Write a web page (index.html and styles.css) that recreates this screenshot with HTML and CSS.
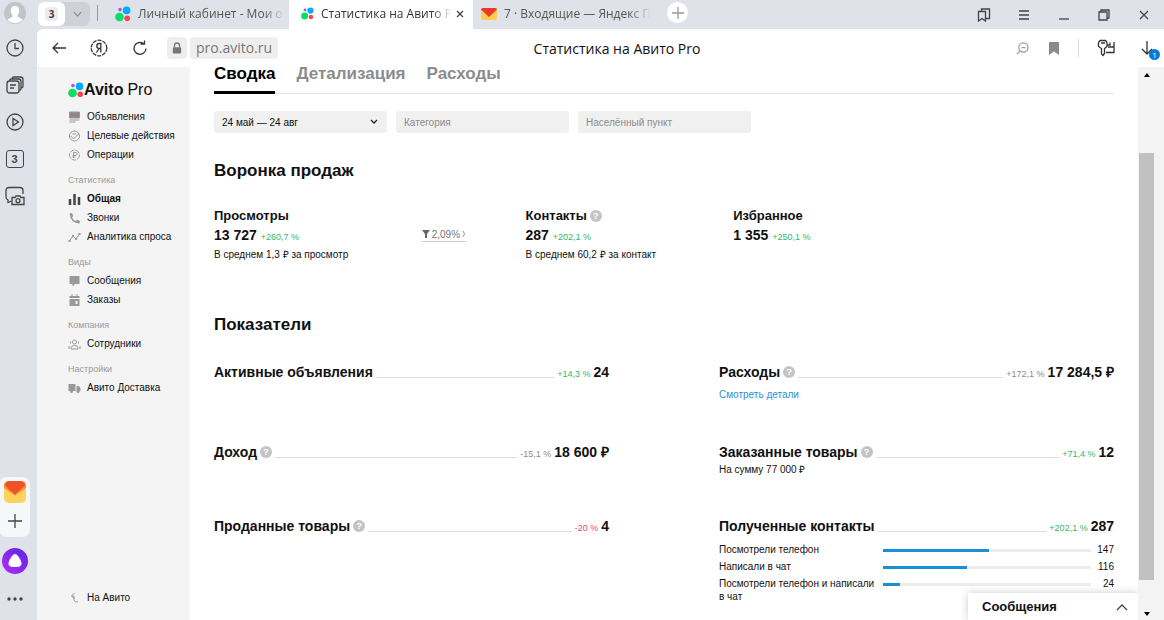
FILE: index.html
```
<!DOCTYPE html>
<html lang="ru">
<head>
    <meta charset="UTF-8">
    <meta name="viewport" content="width=device-width, initial-scale=1.0">
    <title>Статистика на Авито Pro</title>
    <link rel="stylesheet" href="styles.css">
</head>
<body>
    <svg class="sprite" aria-hidden="true">
        <symbol id="avito" viewBox="0 0 16 16">
            <circle cx="4.5" cy="11" r="4.3" fill="#04e061"/>
            <circle cx="11.6" cy="4.4" r="3.8" fill="#00aaff"/>
            <circle cx="12.2" cy="12.2" r="2.8" fill="#ff4053"/>
            <circle cx="5" cy="3.6" r="1.8" fill="#965eeb"/>
        </symbol>
    </svg>

    <div class="browser">
        <header class="tabbar">
            <button class="avatar" aria-label="Профиль">
                <svg viewBox="0 0 22 22" width="22" height="22"><circle cx="11" cy="11" r="11" fill="#c3c4c7"/><path d="M11 4c3 0 4.300 2 4.300 4.600 0 2.200-.8 3.800-1.800 4.700v1.200c0 1 4 1.300 5.200 3.500A11 11 0 0 1 3.300 18c1.200-2.200 5.200-2.500 5.200-3.500v-1.200c-1-.9-1.800-2.500-1.800-4.700C6.700 6 8 4 11 4z" fill="#fff"/></svg>
            </button>
            <div class="tab-group">
                <button class="group-count"><span>3</span></button>
                <button class="group-more" aria-label="Список вкладок">
                    <svg viewBox="0 0 10 6" width="9" height="6"><path d="M1 1l4 4 4-4" class="line"/></svg>
                </button>
            </div>
            <nav class="tabs">
                <a class="tab" href="#"><svg width="16" height="16"><use href="#avito"/></svg><span>Личный кабинет - Мои о</span></a>
                <a class="tab tab-active" href="#"><svg width="13" height="13"><use href="#avito"/></svg><span>Статистика на Авито Pr</span>
                    <svg viewBox="0 0 8 8" width="8" height="8"><path d="M1 1l6 6M7 1L1 7" class="line"/></svg></a>
                <a class="tab" href="#"><svg viewBox="0 0 16 12" width="16" height="12"><rect width="16" height="12" rx="2" fill="#ffcc4d"/><path d="M0 1.500Q0 0 2 0h12q2 0 2 1.500L8 9z" fill="#e8392b"/></svg><span>7 · Входящие — Яндекс П</span></a>
            </nav>
            <button class="new-tab" aria-label="Новая вкладка">
                <svg viewBox="0 0 12 12" width="12" height="12"><path d="M6 0v12M0 6h12" class="line"/></svg>
            </button>
            <div class="window-controls">
                <button aria-label="Закладки"><svg viewBox="0 0 14 14" width="14" height="14"><path d="M1.500 3.500h7v9.500L5 10.500 1.500 13zM4.500 3.500V1h8v9.500h-4" class="line"/></svg></button>
                <button aria-label="Меню"><svg viewBox="0 0 10 10" width="10" height="10"><path d="M0 1h10M0 5h10M0 9h10" class="line"/></svg></button>
                <button aria-label="Свернуть"><svg viewBox="0 0 10 10" width="10" height="10"><path d="M0 9h10" class="line"/></svg></button>
                <button aria-label="Развернуть"><svg viewBox="0 0 12 12" width="12" height="12"><path d="M1 3h8v8H1zM3 3V1h8v8H9" class="line"/></svg></button>
                <button aria-label="Закрыть"><svg viewBox="0 0 10 10" width="10" height="10"><path d="M1 1l8 8M9 1L1 9" class="line"/></svg></button>
            </div>
        </header>

        <div class="window">
            <aside class="rail">
                <button aria-label="История"><svg viewBox="0 0 18 18" width="18" height="18"><circle cx="9" cy="9" r="8" class="line"/><path d="M9 4v5.500h4" class="line"/></svg></button>
                <button aria-label="Коллекции"><svg viewBox="0 0 18 18" width="18" height="18"><rect x="1" y="5" width="12" height="12" rx="2.500" class="line"/><path d="M4 9h6M4 12h4M3.500 4.500Q4 3 5.500 3H12.500Q15 3 15 5.500V12.500Q15 14 13.500 14.500M6 2.500Q6.500 1 8 1H14.500Q17 1 17 3.500V10Q17 11.500 15.500 12" class="line"/></svg></button>
                <button aria-label="Видео"><svg viewBox="0 0 18 18" width="18" height="18"><circle cx="9" cy="9" r="8" class="line"/><path d="M7 5.500v7L12.500 9z" class="line"/></svg></button>
                <button aria-label="Группы вкладок" class="rail-count"><span>3</span></button>
                <button aria-label="Скриншот"><svg viewBox="0 0 20 20" width="20" height="20"><path d="M6.500 15L3 16.500V14Q1 13 1 11V4.500Q1 1.500 4 1.500H15Q18 1.500 18 4.500V8" class="line"/><path d="M7 11.500h3l1-1.500h4l1 1.500h3v7H7z" class="line"/><circle cx="13" cy="14.700" r="2" class="line"/></svg></button>
                <div class="rail-box">
                    <button aria-label="Почта"><svg viewBox="0 0 22 22" width="22" height="22"><rect width="22" height="22" rx="5" fill="#ffd25e"/><path d="M0 5Q0 0 5 0h12q5 0 5 5v2L11 14.500 0 7z" fill="#ff8a3c"/><path d="M1 4.500Q2 0 6 0h10q4 0 5 4.500L11 13.500z" fill="#ee5327"/></svg></button>
                    <button aria-label="Добавить"><svg viewBox="0 0 14 14" width="14" height="14"><path d="M7 0v14M0 7h14" class="line"/></svg></button>
                </div>
                <button aria-label="Алиса" class="alice"><svg viewBox="0 0 26 26" width="26" height="26"><defs><linearGradient id="alice" x1="1" y1="0" x2="0" y2="1"><stop stop-color="#5427e0"/><stop offset="1" stop-color="#b52bff"/></linearGradient></defs><circle cx="13" cy="13" r="13" fill="url(#alice)"/><path d="M13 6c2.500 0 6.500 6.500 6.500 9.500S16.500 19 13 19s-6.500-.5-6.500-3.500S10.500 6 13 6z" fill="#fff"/></svg></button>
                <button aria-label="Ещё"><svg viewBox="0 0 16 4" width="16" height="4" fill="#444"><circle cx="2" cy="2" r="1.700"/><circle cx="8" cy="2" r="1.700"/><circle cx="14" cy="2" r="1.700"/></svg></button>
            </aside>

            <div class="view">
                <div class="toolbar">
                    <div class="nav-buttons">
                        <button aria-label="Назад"><svg viewBox="0 0 14 12" width="14" height="12"><path d="M14 6H1M6 1L1 6l5 5" class="line"/></svg></button>
                        <button aria-label="Яндекс"><svg viewBox="0 0 18 18" width="18" height="18"><circle cx="9" cy="9" r="7.800" class="line" stroke-dasharray="4 1"/><path d="M10.800 13.500v-9H9.300Q6.800 4.500 6.800 7t2.500 2.500h1.500M9 9.500l-2.500 4" class="line"/></svg></button>
                        <button aria-label="Обновить"><svg viewBox="0 0 16 16" width="16" height="16"><path d="M14 8.500A6 6 0 1 1 11.500 3.500M8.500 4h4V.5" class="line"/></svg></button>
                        <div class="address">
                            <button class="lock" aria-label="Защищено"><svg viewBox="0 0 12 14" width="10" height="12"><rect x="1" y="6" width="10" height="7.500" rx="1" fill="#777"/><path d="M3 6V4a3 3 0 0 1 6 0v2" fill="none" stroke="#777" stroke-width="1.600"/></svg></button>
                            <a class="url" href="#">pro.avito.ru</a>
                        </div>
                    </div>
                    <div class="page-title">Статистика на Авито Pro</div>
                    <div class="toolbar-actions">
                        <button aria-label="Масштаб"><svg class="dim" viewBox="0 0 14 14" width="13" height="13"><circle cx="8" cy="6" r="5" class="line"/><path d="M6 6h4M4.500 9.500L1 13" class="line"/></svg></button>
                        <button aria-label="В закладки"><svg viewBox="0 0 10 13" width="10" height="13"><path d="M0 1Q0 0 1 0h8q1 0 1 1v12L5 9.500 0 13z" fill="#8a8a8a"/></svg></button>
                        <i class="divider"></i>
                        <button aria-label="Пароли"><svg viewBox="0 0 18 18" width="18" height="18"><path d="M3 1.500h5.500l1.500 2v4l-2.500 2v5L6 16.500l-1.500-1.500V9.500L1.500 7.500v-4zM4 4h4M10 6h3V3.500M17 3v10.500H9M17 8h-6" class="line"/></svg></button>
                        <button class="download" aria-label="Загрузки"><svg viewBox="0 0 12 14" width="12" height="14"><path d="M6 0v13M1 8l5 5 5-5" class="line"/></svg><span class="badge">1</span></button>
                    </div>
                </div>

                <div class="page">
                    <nav class="sidebar">
                        <a class="logo" href="#"><svg width="16" height="16"><use href="#avito"/></svg><b>Avito</b> <span>Pro</span></a>
                        <a class="item" href="#"><svg viewBox="0 0 12 12"><path d="M1 1h10v6H1z" fill="#8f8787"/><path d="M1 9h10M1 11h6"/></svg>Объявления</a>
                        <a class="item" href="#"><svg viewBox="0 0 12 12"><circle cx="6" cy="6" r="5"/><path d="M2 6l3 3 5-5M4 4h4"/></svg>Целевые действия</a>
                        <a class="item" href="#"><svg viewBox="0 0 12 12"><circle cx="6" cy="6" r="5" stroke-dasharray="5 1"/><path d="M5 9V3.500h2a1.500 1.500 0 0 1 0 3H4M4 8h3"/></svg>Операции</a>
                        <h4>Статистика</h4>
                        <a class="item item-active" href="#"><svg viewBox="0 0 12 12"><path d="M1.500 12V6M6 12V1M10.500 12V4" stroke-width="2.500"/></svg>Общая</a>
                        <a class="item" href="#"><svg viewBox="0 0 12 12"><path d="M1 1.500L3.500 1l1.300 3L3.500 5.500Q5 8 7 9l1.500-1.200L11.500 9l-.5 2.500Q2 11 1 1.500z" class="solid"/></svg>Звонки</a>
                        <a class="item" href="#"><svg viewBox="0 0 12 12"><path d="M1 10l3.500-5 3 3L11.500 2"/><path d="M0 9h2v2H0zM3.500 4h2v2h-2zM6.500 7h2v2h-2zM10 2h2v2h-2z" class="solid"/></svg>Аналитика спроса</a>
                        <h4>Виды</h4>
                        <a class="item" href="#"><svg viewBox="0 0 12 12"><path d="M1 1h10v8H6.500L4 11.500V9H1z" class="solid"/></svg>Сообщения</a>
                        <a class="item" href="#"><svg viewBox="0 0 12 12"><path d="M1 2h10v2H1zM1 5h10v7H1zM3 0h1v2H3zM8 0h1v2H8z" class="solid"/><path d="M7 7h2v3H7z" fill="#f4f4f4" stroke="none"/></svg>Заказы</a>
                        <h4>Компания</h4>
                        <a class="item" href="#"><svg viewBox="0 0 12 12"><circle cx="6" cy="4" r="2"/><path d="M2.500 11V9.500Q3 7.500 6 7.500T9.500 9.500V11zM2 3.500v2M10 3.500v2M.5 11V8M11.500 11V8"/></svg>Сотрудники</a>
                        <h4>Настройки</h4>
                        <a class="item" href="#"><svg viewBox="0 0 12 12"><path d="M0 2h7v7H0zM8 4h2.500L12 6.500V9H8z" class="solid"/><circle cx="3" cy="9.500" r="1.500" class="solid"/><circle cx="9.500" cy="9.500" r="1.500" class="solid"/></svg>Авито Доставка</a>
                        <a class="item item-back" href="#"><svg viewBox="0 0 12 12"><path d="M6 1L3 4l3 3M3 4h2.500v4.500Q6 10 9.500 10"/></svg>На Авито</a>
                    </nav>

                    <main class="content">
                        <nav class="sections">
                            <a class="current" href="#">Сводка</a>
                            <a href="#">Детализация</a>
                            <a href="#">Расходы</a>
                        </nav>

                        <form class="filters">
                            <select aria-label="Период"><option>24 май — 24 авг</option></select>
                            <input type="text" aria-label="Категория" placeholder="Категория">
                            <input type="text" aria-label="Населённый пункт" placeholder="Населённый пункт">
                        </form>

                        <h2>Воронка продаж</h2>
                        <section class="funnel">
                            <div>
                                <h3>Просмотры</h3>
                                <p class="value">13 727 <small class="up">+260,7 %</small></p>
                                <p class="note">В среднем 1,3 ₽ за просмотр</p>
                            </div>
                            <div class="conversion">
                                <a href="#"><svg viewBox="0 0 8 8" width="8" height="8"><path d="M0 0h8L5 4v4H3V4z" fill="#666"/></svg>2,09%<svg viewBox="0 0 4 8" width="4" height="8"><path d="M1 1q3 3 0 6" fill="none" stroke="#999"/></svg></a>
                            </div>
                            <div>
                                <h3>Контакты <button class="help" aria-label="Подсказка">?</button></h3>
                                <p class="value">287 <small class="up">+202,1 %</small></p>
                                <p class="note">В среднем 60,2 ₽ за контакт</p>
                            </div>
                            <div>
                                <h3>Избранное</h3>
                                <p class="value">1 355 <small class="up">+250,1 %</small></p>
                            </div>
                        </section>

                        <h2>Показатели</h2>
                        <section class="metrics">
                            <div class="metric">
                                <div class="row"><h3>Активные объявления</h3><i></i><small class="up">+14,3 %</small><b>24</b></div>
                            </div>
                            <div class="metric">
                                <div class="row"><h3>Расходы <button class="help" aria-label="Подсказка">?</button></h3><i></i><small>+172,1 %</small><b>17 284,5 ₽</b></div>
                                <a class="details" href="#">Смотреть детали</a>
                            </div>
                            <div class="metric">
                                <div class="row"><h3>Доход <button class="help" aria-label="Подсказка">?</button></h3><i></i><small>-15,1 %</small><b>18 600 ₽</b></div>
                            </div>
                            <div class="metric">
                                <div class="row"><h3>Заказанные товары <button class="help" aria-label="Подсказка">?</button></h3><i></i><small class="up">+71,4 %</small><b>12</b></div>
                                <p class="note">На сумму 77 000 ₽</p>
                            </div>
                            <div class="metric">
                                <div class="row"><h3>Проданные товары <button class="help" aria-label="Подсказка">?</button></h3><i></i><small class="down">-20 %</small><b>4</b></div>
                            </div>
                            <div class="metric">
                                <div class="row"><h3>Полученные контакты</h3><i></i><small class="up">+202,1 %</small><b>287</b></div>
                                <ul class="bars">
                                    <li><span>Посмотрели телефон</span><div class="bar"><div style="width: 51.2%"></div></div><em>147</em></li>
                                    <li><span>Написали в чат</span><div class="bar"><div style="width: 40.4%"></div></div><em>116</em></li>
                                    <li><span>Посмотрели телефон и написали в чат</span><div class="bar"><div style="width: 8.4%"></div></div><em>24</em></li>
                                </ul>
                            </div>
                        </section>

                        <button class="messenger">Сообщения <svg viewBox="0 0 12 8" width="12" height="8"><path d="M1 7l5-5 5 5" class="line"/></svg></button>
                    </main>

                    <div class="scrollbar">
                        <svg viewBox="0 0 6 4" width="6" height="4"><path d="M0 4l3-4 3 4z"/></svg>
                        <div class="thumb"></div>
                        <svg viewBox="0 0 6 4" width="6" height="4"><path d="M0 0l3 4 3-4z"/></svg>
                    </div>
                </div>
            </div>
        </div>
    </div>
</body>
</html>
```
FILE: styles.css
```
* {
    box-sizing: border-box;
}
body {
    margin: 0;
    font-family: "Liberation Sans", Arial, sans-serif;
    font-size: 10px;
    color: #111;
    background: #fff;
}
a {
    color: inherit;
    text-decoration: none;
}
button {
    display: flex;
    align-items: center;
    justify-content: center;
    padding: 0;
    border: 0;
    background: none;
    font: inherit;
    color: inherit;
    cursor: pointer;
}
h2, h3, h4, p, ul {
    margin: 0;
    padding: 0;
}
svg {
    flex: none;
}
.line {
    fill: none;
    stroke: #444;
    stroke-width: 1.3;
}
.sprite {
    display: none;
}

/* browser window */
.browser {
    display: flex;
    flex-direction: column;
    height: 100vh;
    overflow: hidden;
    background: #dfe2e9;
}
.tabbar {
    display: flex;
    align-items: center;
    height: 29px;
    padding-left: 4px;
    font-family: "Open Sans", sans-serif;
    font-size: 12px;
}
.avatar {
    margin-bottom: 4px;
}
.tab-group {
    display: flex;
    height: 24px;
    margin: 0 7px 2px 12px;
    border-radius: 6px;
    background: #cfd1d6;
}
.group-count {
    width: 27px;
    border-radius: 6px;
    background: #fff;
    font-size: 10px;
    font-weight: bold;
    color: #444;
}
.group-count span {
    padding: 0 4px;
    border-radius: 4px;
    background: #ececec;
}
.group-more {
    width: 25px;
}
.group-more .line {
    stroke: #888;
}
.tabs {
    display: flex;
    align-self: stretch;
    padding-left: 10px;
    position: relative;
}
.tabs::before {
    content: "";
    width: 1px;
    height: 16px;
    margin-top: 5px;
    background: #999;
    position: absolute;
    left: 0;
}
.tab {
    display: flex;
    align-items: center;
    gap: 7px;
    width: 182px;
    padding: 0 4px 2px 8px;
    border-radius: 0 0 6px 6px;
    color: #555;
}
.tab span {
    flex: 1;
    overflow: hidden;
    white-space: nowrap;
    -webkit-mask-image: linear-gradient(to right, #000 85%, transparent);
    mask-image: linear-gradient(to right, #000 85%, transparent);
}
.tab-active {
    gap: 4px;
    width: 184px;
    padding: 0 9px 2px 12px;
    border-radius: 0;
    background: #fff;
    color: #333;
}
.tab-active span {
    padding-left: 3px;
}
.new-tab {
    width: 21px;
    height: 21px;
    margin: 0 0 4px 12px;
    border-radius: 50%;
    background: #fff;
}
.new-tab .line {
    stroke: #999;
}
.window-controls {
    display: flex;
    margin-left: auto;
}
.window-controls button {
    width: 40px;
    height: 26px;
}
.window {
    display: flex;
    flex: 1;
    min-height: 0;
}
.rail {
    display: flex;
    flex-direction: column;
    align-items: center;
    width: 37px;
    padding: 0 8px 7px 0;
}
.rail button {
    height: 37px;
}
.rail-count span {
    width: 18px;
    border: 1px solid #444;
    border-radius: 3px;
    font-size: 11px;
    font-weight: bold;
    line-height: 16px;
    color: #444;
}
.rail-box {
    display: flex;
    flex-direction: column;
    align-items: center;
    width: 31px;
    margin-top: auto;
    padding-bottom: 2px;
    border-radius: 8px;
    background: #f6f7f9;
}
.rail-box button {
    height: 30px;
}
.rail .alice {
    height: 48px;
}
.rail button:last-child {
    height: 28px;
}

/* toolbar */
.view {
    display: flex;
    flex: 1;
    flex-direction: column;
    min-width: 0;
    border-top-left-radius: 6px;
    background: #fff;
}
.toolbar {
    display: grid;
    grid-template-columns: 1fr auto 1fr;
    align-items: center;
    height: 38px;
    padding-left: 15px;
    font-family: "Open Sans", sans-serif;
}
.toolbar .line {
    stroke: #333;
}
.nav-buttons, .toolbar-actions {
    display: flex;
    align-items: center;
}
.nav-buttons {
    gap: 24px;
}
.address {
    display: flex;
    gap: 3px;
    margin-left: -5px;
}
.lock, .url {
    height: 22px;
    border-radius: 4px;
    background: #eee;
}
.lock {
    width: 20px;
}
.url {
    padding: 0 6px;
    font-size: 14px;
    line-height: 22px;
    color: #777;
}
.page-title {
    margin-left: 18px;
    font-size: 14px;
    white-space: nowrap;
}
.toolbar-actions {
    justify-content: flex-end;
    gap: 20px;
    padding-right: 11px;
}
.toolbar .dim .line {
    stroke: #999;
}
.divider {
    width: 1px;
    height: 18px;
    margin: 0 -2px 0 -1px;
    background: #ddd;
}
.download {
    position: relative;
    margin-left: 6px;
}
.badge {
    position: absolute;
    right: -7px;
    bottom: -5px;
    width: 11px;
    border-radius: 50%;
    background: #0a7ad6;
    font-size: 8px;
    line-height: 11px;
    color: #fff;
}

/* page */
.page {
    display: flex;
    flex: 1;
    min-height: 0;
}
.sidebar {
    display: flex;
    flex-direction: column;
    width: 153px;
    padding: 13px 0 13px 31px;
    background: #f4f4f4;
}
.logo {
    display: flex;
    align-items: center;
    height: 20px;
    margin-bottom: 7px;
    font-size: 16px;
}
.logo span {
    margin-left: 4px;
}
.sidebar h4 {
    height: 18px;
    margin-top: 7px;
    font-size: 9px;
    font-weight: normal;
    line-height: 18px;
    color: #999;
}
.item {
    display: flex;
    align-items: center;
    gap: 6px;
    height: 19px;
    white-space: nowrap;
}
.item svg {
    width: 13px;
    height: 12px;
    fill: none;
    stroke: #999;
}
.item .solid {
    fill: #999;
    stroke: none;
}
.item-active {
    font-weight: bold;
}
.item-active svg {
    stroke: #444;
}
.item-back {
    margin-top: auto;
}
.content {
    position: relative;
    flex: 1;
    min-width: 0;
    padding: 0 24px;
    overflow: hidden;
}
.sections {
    display: flex;
    gap: 21px;
    height: 27px;
    border-bottom: 1px solid #e3e3e3;
    font-size: 17px;
    font-weight: bold;
    line-height: 13px;
    color: #8c8c8c;
}
.sections a {
    height: 27px;
}
.sections .current {
    border-bottom: 3px solid #000;
    color: #000;
}
.filters {
    display: flex;
    gap: 9px;
    margin-top: 17px;
}
.filters select, .filters input {
    width: 173px;
    height: 22px;
    padding: 0 8px;
    border: 0;
    border-radius: 3px;
    background: #f0f0f0;
    font: inherit;
    color: #111;
}
.filters select {
    appearance: none;
    background: #f0f0f0 url("data:image/svg+xml,%3Csvg xmlns='http://www.w3.org/2000/svg' viewBox='0 0 8 6'%3E%3Cpath d='M1 1l3 3 3-3' fill='none' stroke='%23222' stroke-width='1.3'/%3E%3C/svg%3E") no-repeat right 9px center / 8px 6px;
}
.filters input::placeholder {
    color: #8c8c8c;
}
h2 {
    font-size: 17px;
    line-height: 24px;
}
.filters + h2 {
    margin-top: 26px;
}
h3 {
    display: flex;
    align-items: center;
    gap: 3px;
    font-size: 13px;
    line-height: 18px;
}
.help {
    width: 12px;
    height: 12px;
    border-radius: 50%;
    background: #c4c4c4;
    font-size: 9px;
    font-weight: bold;
    color: #fff;
}
small {
    font-size: 9px;
    font-weight: normal;
    color: #8c8c8c;
}
.up {
    color: #35b56a;
}
.down {
    color: #e8476a;
}
.note {
    font-size: 10px;
    line-height: 16px;
}
.funnel {
    display: grid;
    grid-template-columns: 6fr 3fr 6fr 11fr;
    height: 106px;
    margin-top: 24px;
    white-space: nowrap;
}
.value {
    font-size: 14px;
    font-weight: bold;
    line-height: 20px;
}
.conversion {
    padding-top: 20px;
    color: #777;
}
.conversion a {
    display: inline-flex;
    align-items: center;
    gap: 2px;
    height: 15px;
    border-bottom: 1px solid #ccc;
}
.metrics {
    display: grid;
    grid-template-columns: 1fr 1fr;
    grid-template-rows: 80px 74px auto;
    column-gap: 110px;
    margin-top: 25px;
}
.row {
    display: flex;
    align-items: baseline;
    gap: 3px;
    height: 20px;
    line-height: 20px;
}
.row h3 {
    font-size: 14px;
    line-height: 20px;
}
.row i {
    flex: 1;
    align-self: flex-end;
    margin-bottom: 4px;
    border-bottom: 1px solid #ddd;
}
.row b {
    font-size: 14px;
}
.details {
    display: inline-block;
    margin-top: 5px;
    line-height: 16px;
    color: #2a8fd8;
}
.bars {
    margin-top: 7px;
    list-style: none;
}
.bars li {
    display: grid;
    grid-template-columns: 164px 1fr 23px;
    margin-bottom: 4px;
    line-height: 13px;
}
.bars span {
    padding-right: 8px;
}
.bars em {
    font-style: normal;
    text-align: right;
}
.bar {
    height: 3px;
    margin-top: 6px;
    background: #ececec;
}
.bar div {
    height: 3px;
    background: #1a8fd8;
}
.messenger {
    position: absolute;
    right: 0;
    bottom: 0;
    justify-content: space-between;
    width: 170px;
    height: 27px;
    padding: 0 10px 0 14px;
    background: #fff;
    box-shadow: 0 0 8px rgba(0, 0, 0, 0.2);
    font-size: 13px;
    font-weight: bold;
}
.scrollbar {
    display: flex;
    flex-direction: column;
    width: 26px;
    padding: 6px 10px 4px 1px;
    background: #f3f3f3;
}
.scrollbar svg {
    align-self: center;
}
.thumb {
    flex: 1;
    margin: 76px 0 32px;
    background: #c1c1c1;
}
```
